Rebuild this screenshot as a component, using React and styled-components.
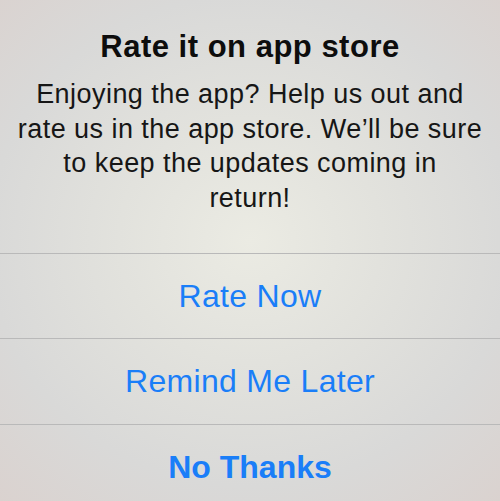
import React from "react";
import styled, { createGlobalStyle } from "styled-components";

const GlobalStyle = createGlobalStyle`
  html, body {
    margin: 0;
    padding: 0;
  }
  body {
    font-family: "Liberation Sans", Arial, sans-serif;
  }
`;

const Alert = styled.div`
  width: 500px;
  height: 501px;
  overflow: hidden;
  display: flex;
  flex-direction: column;
  background: radial-gradient(
    ellipse 75% 70% at 50% 48%,
    #ebebe3 0%,
    #e2e2dd 35%,
    #d9d9d8 70%,
    #dad2cf 100%
  );
`;

const Header = styled.div`
  display: flex;
  flex-direction: column;
  align-items: center;
  padding: 29px 10px 37px;
  text-align: center;
`;

const Title = styled.h2`
  margin: 0;
  font-size: 31px;
  line-height: 36px;
  font-weight: 700;
  letter-spacing: 0.5px;
  color: #0d0d0d;
`;

const Message = styled.p`
  margin: 12px 0 0;
  font-size: 27px;
  line-height: 34.7px;
  letter-spacing: 0.45px;
  color: #161616;
`;

const Button = styled.button`
  flex: none;
  height: 85.5px;
  border: 0;
  border-top: 1.5px solid #b9b9b9;
  background: transparent;
  font-family: inherit;
  font-size: 32px;
  letter-spacing: ${(p) => (p.$primary ? "0" : "0.3px")};
  font-weight: ${(p) => (p.$primary ? 700 : 400)};
  color: #1a7ef8;
  padding: 0;
`;

export default function App() {
  return (
    <>
      <GlobalStyle />
      <Alert>
        <Header>
          <Title>Rate it on app store</Title>
          <Message>
            Enjoying the app? Help us out and
            <br />
            rate us in the app store. We’ll be sure
            <br />
            to keep the updates coming in
            <br />
            return!
          </Message>
        </Header>
        <Button>Rate Now</Button>
        <Button>Remind Me Later</Button>
        <Button $primary>No Thanks</Button>
      </Alert>
    </>
  );
}
